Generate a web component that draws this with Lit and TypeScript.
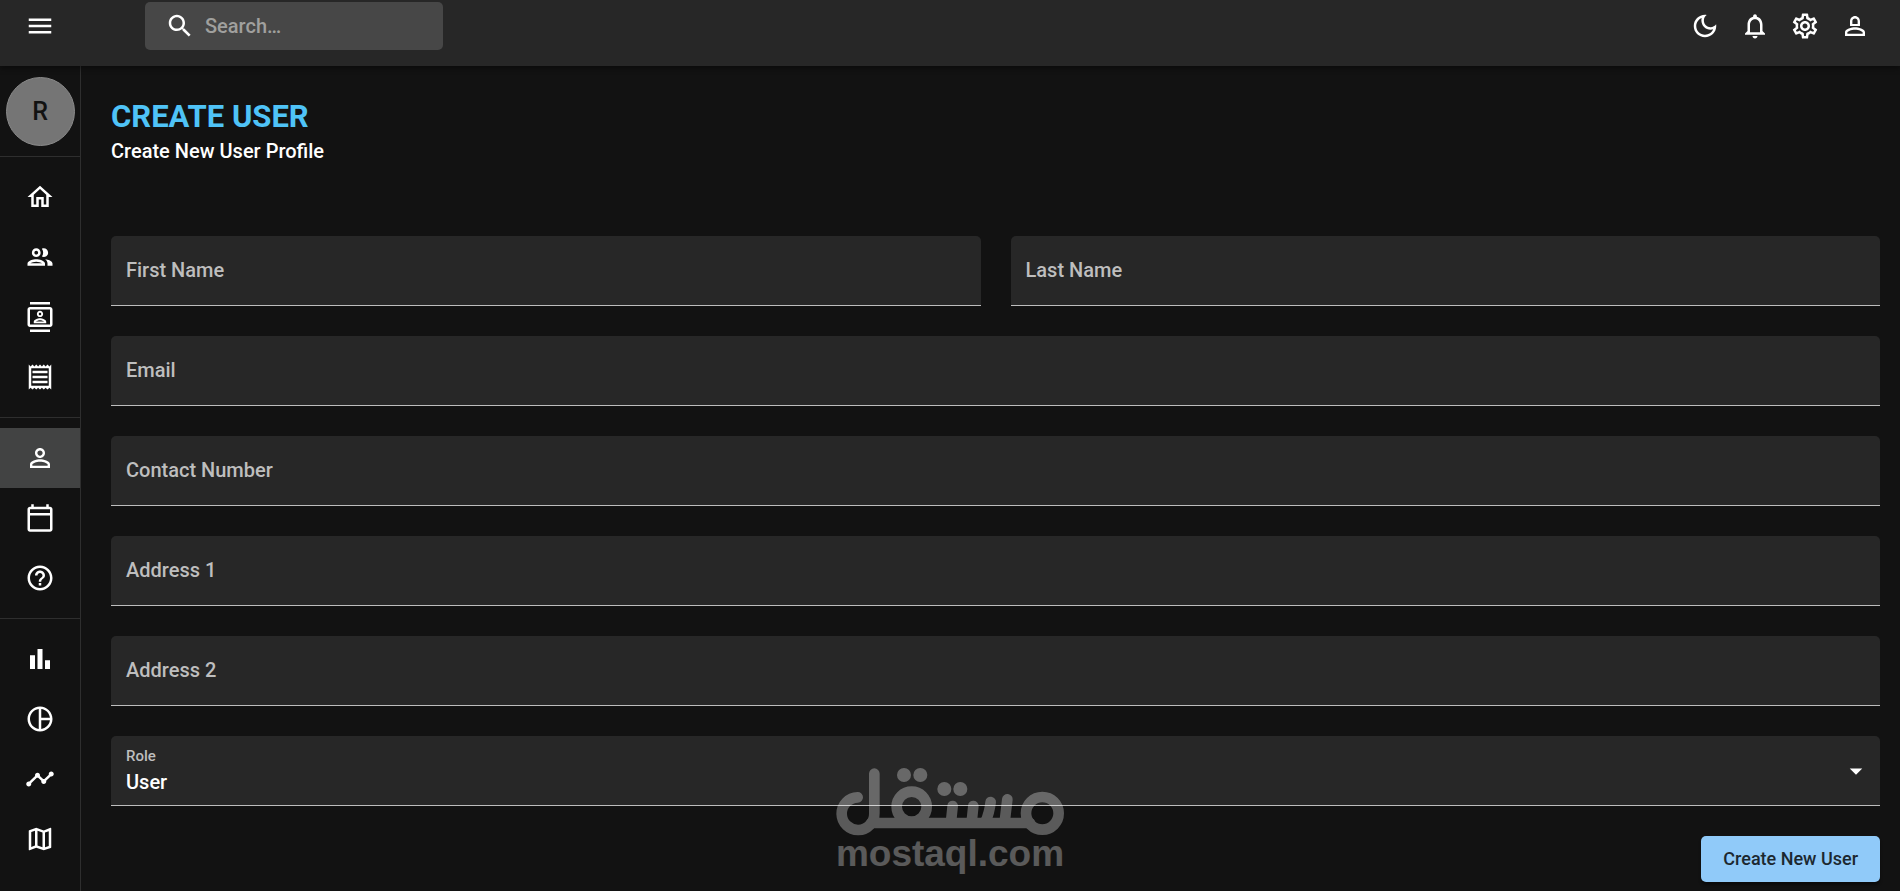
import { LitElement, html, css, svg } from "lit";
import { customElement, property } from "lit/decorators.js";
import { classMap } from "lit/directives/class-map.js";

const ICONS: Record<string, string> = {
  menu: "M3 18h18v-2H3v2zm0-5h18v-2H3v2zm0-7v2h18V6H3z",
  search:
    "M15.5 14h-.79l-.28-.27C15.41 12.59 16 11.11 16 9.5 16 5.91 13.09 3 9.5 3S3 5.91 3 9.5 5.91 16 9.5 16c1.61 0 3.09-.59 4.23-1.57l.27.28v.79l5 4.99L20.49 19l-4.99-5zm-6 0C7.01 14 5 11.99 5 9.5S7.01 5 9.5 5 14 7.01 14 9.5 11.99 14 9.5 14z",
  moon: "M9.37 5.51c-.18.64-.27 1.31-.27 1.99 0 4.08 3.32 7.4 7.4 7.4.68 0 1.35-.09 1.99-.27C17.45 17.19 14.93 19 12 19c-3.86 0-7-3.14-7-7 0-2.93 1.81-5.45 4.37-6.49zM12 3c-4.97 0-9 4.03-9 9s4.03 9 9 9 9-4.03 9-9c0-.46-.04-.92-.1-1.36-.98 1.37-2.58 2.26-4.4 2.26-2.98 0-5.4-2.42-5.4-5.4 0-1.81.89-3.42 2.26-4.4-.44-.06-.9-.1-1.36-.1z",
  bell: "M12 22c1.1 0 2-.9 2-2h-4c0 1.1.9 2 2 2zm6-6v-5c0-3.07-1.63-5.64-4.5-6.32V4c0-.83-.67-1.5-1.5-1.5s-1.5.67-1.5 1.5v.68C7.64 5.36 6 7.92 6 11v5l-2 2v1h16v-1l-2-2zm-2 1H8v-6c0-2.48 1.51-4.5 4-4.5s4 2.02 4 4.5v6z",
  settings:
    "M19.43 12.98c.04-.32.07-.64.07-.98 0-.34-.03-.66-.07-.98l2.11-1.65c.19-.15.24-.42.12-.64l-2-3.46c-.09-.16-.26-.25-.44-.25-.06 0-.12.01-.17.03l-2.49 1c-.52-.4-1.08-.73-1.69-.98l-.38-2.65C14.46 2.18 14.25 2 14 2h-4c-.25 0-.46.18-.49.42l-.38 2.65c-.61.25-1.17.59-1.69.98l-2.49-1c-.06-.02-.12-.03-.18-.03-.17 0-.34.09-.43.25l-2 3.46c-.13.22-.07.49.12.64l2.11 1.65c-.04.32-.07.65-.07.98 0 .33.03.66.07.98l-2.11 1.65c-.19.15-.24.42-.12.64l2 3.46c.09.16.26.25.44.25.06 0 .12-.01.17-.03l2.49-1c.52.4 1.08.73 1.69.98l.38 2.65c.03.24.24.42.49.42h4c.25 0 .46-.18.49-.42l.38-2.65c.61-.25 1.17-.59 1.69-.98l2.49 1c.06.02.12.03.18.03.17 0 .34-.09.43-.25l2-3.46c.12-.22.07-.49-.12-.64l-2.11-1.65zm-1.98-1.71c.04.31.05.52.05.73 0 .21-.02.43-.05.73l-.14 1.13.89.7 1.08.84-.7 1.21-1.27-.51-1.04-.42-.9.68c-.43.32-.84.56-1.25.73l-1.06.43-.16 1.13-.2 1.35h-1.4l-.19-1.35-.16-1.13-1.06-.43c-.43-.18-.83-.41-1.23-.71l-.91-.7-1.06.43-1.27.51-.7-1.21 1.08-.84.89-.7-.14-1.13c-.03-.31-.05-.54-.05-.74s.02-.43.05-.73l.14-1.13-.89-.7-1.08-.84.7-1.21 1.27.51 1.04.42.9-.68c.43-.32.84-.56 1.25-.73l1.06-.43.16-1.13.2-1.35h1.39l.19 1.35.16 1.13 1.06.43c.43.18.83.41 1.23.71l.91.7 1.06-.43 1.27-.51.7 1.21-1.07.85-.89.7.14 1.13zM12 8c-2.21 0-4 1.79-4 4s1.79 4 4 4 4-1.79 4-4-1.79-4-4-4zm0 6c-1.1 0-2-.9-2-2s.9-2 2-2 2 .9 2 2-.9 2-2 2z",
  account:
    "M12 4C9.8 4 8 5.8 8 8.3v3.2q0 .5.5.5h7q.5 0 .5-.5V8.3C16 5.8 14.2 4 12 4zm0 1.9c1.2 0 2.1.9 2.1 2.1v2.3H9.9V8c0-1.2.9-2.1 2.1-2.1zM12 14.9c2.97 0 6.1 1.46 6.1 2.1v1.1H5.9V17c0-.64 3.13-2.1 6.1-2.1M12 13c-2.67 0-8 1.34-8 4v3h16v-3c0-2.66-5.33-4-8-4z",
  person:
    "M12 5.9c1.16 0 2.1.94 2.1 2.1s-.94 2.1-2.1 2.1S9.9 9.16 9.9 8s.94-2.1 2.1-2.1m0 9c2.97 0 6.1 1.46 6.1 2.1v1.1H5.9V17c0-.64 3.13-2.1 6.1-2.1M12 4C9.79 4 8 5.79 8 8s1.79 4 4 4 4-1.79 4-4-1.79-4-4-4zm0 9c-2.67 0-8 1.34-8 4v3h16v-3c0-2.66-5.33-4-8-4z",
  home: "m12 5.69 5 4.5V18h-2v-6H9v6H7v-7.81l5-4.5M12 3 2 12h3v8h6v-6h2v6h6v-8h3L12 3z",
  people:
    "M9 13.75c-2.34 0-7 1.17-7 3.5V19h14v-1.75c0-2.33-4.66-3.5-7-3.5zM4.34 17c.84-.58 2.87-1.25 4.66-1.25s3.82.67 4.66 1.25H4.34zM9 12c1.93 0 3.5-1.57 3.5-3.5S10.93 5 9 5 5.5 6.57 5.5 8.5 7.07 12 9 12zm0-5c.83 0 1.5.67 1.5 1.5S9.83 10 9 10s-1.5-.67-1.5-1.5S8.17 7 9 7zm7.04 6.81c1.16.84 1.96 1.96 1.96 3.44V19h4v-1.75c0-2.02-3.5-3.17-5.96-3.44zM15 12c1.93 0 3.5-1.57 3.5-3.5S16.93 5 15 5c-.54 0-1.04.13-1.5.35.63.89 1 1.98 1 3.15s-.37 2.26-1 3.15c.46.22.96.35 1.5.35z",
  contacts:
    "M20 4H4c-1.1 0-2 .9-2 2v12c0 1.1.9 2 2 2h16c1.1 0 2-.9 2-2V6c0-1.1-.9-2-2-2zm0 14H4V6h16v12zM4 0h16v2H4zm0 22h16v2H4zm8-10c1.38 0 2.5-1.12 2.5-2.5S13.38 7 12 7 9.5 8.12 9.5 9.5 10.62 12 12 12zm0-3.5c.55 0 1 .45 1 1s-.45 1-1 1-1-.45-1-1 .45-1 1-1zm5 7.49C17 13.9 13.69 13 12 13s-5 .9-5 2.99V17h10v-1.01zm-8.19-.49c.61-.52 2.03-1 3.19-1 1.17 0 2.59.48 3.2 1H8.81z",
  receipt:
    "M19.5 3.5 18 2l-1.5 1.5L15 2l-1.5 1.5L12 2l-1.5 1.5L9 2 7.5 3.5 6 2 4.5 3.5 3 2v20l1.5-1.5L6 22l1.5-1.5L9 22l1.5-1.5L12 22l1.5-1.5L15 22l1.5-1.5L18 22l1.5-1.5L21 22V2l-1.5 1.5zM19 19.09H5V4.91h14v14.18zM6 15h12v2H6zm0-4h12v2H6zm0-4h12v2H6z",
  calendar:
    "M20 3h-1V1h-2v2H7V1H5v2H4c-1.1 0-2 .9-2 2v16c0 1.1.9 2 2 2h16c1.1 0 2-.9 2-2V5c0-1.1-.9-2-2-2zm0 18H4V10h16v11zm0-13H4V5h16v3z",
  help: "M11 18h2v-2h-2v2zm1-16C6.48 2 2 6.48 2 12s4.48 10 10 10 10-4.48 10-10S17.52 2 12 2zm0 18c-4.41 0-8-3.59-8-8s3.59-8 8-8 8 3.59 8 8-3.59 8-8 8zm0-14c-2.21 0-4 1.79-4 4h2c0-1.1.9-2 2-2s2 .9 2 2c0 2-3 1.75-3 5h2c0-2.25 3-2.5 3-5 0-2.21-1.79-4-4-4z",
  bar: "M4 9h4v11H4zm12 4h4v7h-4zm-6-9h4v16h-4z",
  pie: "M12 2C6.48 2 2 6.48 2 12s4.48 10 10 10 10-4.48 10-10S17.52 2 12 2zm1 2.07c3.61.45 6.48 3.33 6.93 6.93H13V4.07zM4 12c0-4.06 3.07-7.44 7-7.93v15.87c-3.93-.5-7-3.88-7-7.94zm9 7.93V13h6.93c-.45 3.61-3.32 6.48-6.93 6.93z",
  timeline:
    "M23 8c0 1.1-.9 2-2 2-.18 0-.35-.02-.51-.07l-3.56 3.55c.05.16.07.34.07.52 0 1.1-.9 2-2 2s-2-.9-2-2c0-.18.02-.36.07-.52l-2.55-2.55c-.16.05-.34.07-.52.07s-.36-.02-.52-.07l-4.55 4.56c.05.16.07.33.07.51 0 1.1-.9 2-2 2s-2-.9-2-2 .9-2 2-2c.18 0 .35.02.51.07l4.56-4.55C8.02 9.36 8 9.18 8 9c0-1.1.9-2 2-2s2 .9 2 2c0 .18-.02.36-.07.52l2.55 2.55c.16-.05.34-.07.52-.07s.36.02.52.07l3.55-3.56C19.02 8.35 19 8.18 19 8c0-1.1.9-2 2-2s2 .9 2 2z",
  map: "m20.5 3-.16.03L15 5.1 9 3 3.36 4.9c-.21.07-.36.25-.36.48V20.5c0 .28.22.5.5.5l.16-.03L9 18.9l6 2.1 5.64-1.9c.21-.07.36-.25.36-.48V3.5c0-.28-.22-.5-.5-.5zM10 5.47l4 1.4v11.66l-4-1.4V5.47zm-5 .99 3-1.01v11.7l-3 1.16V6.46zm14 11.08-3 1.01V6.86l3-1.16v11.84z",
  caret: "M7 10l5 5 5-5z",
};

@customElement("ui-icon")
export class UiIcon extends LitElement {
  @property() name = "";

  static styles = css`
    :host {
      display: block;
      width: 30px;
      height: 30px;
    }
    .glyph {
      display: block;
      width: 100%;
      height: 100%;
      fill: currentColor;
    }
  `;

  render() {
    return html`<svg class="glyph" viewBox="0 0 24 24" aria-hidden="true">
      ${svg`<path d=${ICONS[this.name] ?? ""}></path>`}
    </svg>`;
  }
}

@customElement("top-bar")
export class TopBar extends LitElement {
  static styles = css`
    :host {
      display: block;
    }
    .bar {
      display: flex;
      align-items: center;
      padding: 2px 20px 16px 15px;
      background: #272727;
      box-shadow: 0 3px 5px rgba(0, 0, 0, 0.35);
    }
    .icon-button {
      display: grid;
      place-items: center;
      width: 50px;
      height: 48px;
      padding: 0;
      border: 0;
      background: none;
      color: #fff;
      cursor: pointer;
    }
    .search {
      display: flex;
      align-items: center;
      gap: 10px;
      box-sizing: border-box;
      width: 298px;
      height: 48px;
      margin-left: 80px;
      padding: 0 15px 0 20px;
      border-radius: 5px;
      background: #474747;
      color: #fff;
    }
    .search-icon {
      flex: none;
    }
    .search-input {
      flex: 1;
      min-width: 0;
      padding: 0;
      border: 0;
      outline: 0;
      background: none;
      color: inherit;
      font: 500 20px/28px Roboto, sans-serif;
    }
    .search-input::placeholder {
      color: #a0a09e;
      opacity: 1;
    }
    .actions {
      display: flex;
      margin-left: auto;
    }
  `;

  render() {
    const actions = [
      ["moon", "Toggle theme"],
      ["bell", "Notifications"],
      ["settings", "Settings"],
      ["account", "Account"],
    ];
    return html`<header class="bar">
      <button class="icon-button" aria-label="Open menu"><ui-icon name="menu"></ui-icon></button>
      <label class="search">
        <ui-icon class="search-icon" name="search"></ui-icon>
        <input class="search-input" type="search" placeholder="Search…" aria-label="Search" />
      </label>
      <div class="actions">
        ${actions.map(
          ([icon, label]) =>
            html`<button class="icon-button" aria-label=${label}><ui-icon name=${icon}></ui-icon></button>`
        )}
      </div>
    </header>`;
  }
}

@customElement("side-nav")
export class SideNav extends LitElement {
  @property() active = "person";

  static styles = css`
    :host {
      display: block;
      flex: none;
      box-sizing: border-box;
      width: 81px;
      padding-top: 11px;
      border-right: 1px solid #2e2e2e;
    }
    .avatar {
      display: grid;
      place-items: center;
      box-sizing: border-box;
      width: 69px;
      height: 69px;
      margin: 0 auto 10px;
      border: 1px solid #8a8a8a;
      border-radius: 50%;
      background: #757575;
      color: #121212;
      font: 500 25px/30px Roboto, sans-serif;
    }
    .group {
      padding: 10px 0;
      border-top: 1px solid #2e2e2e;
    }
    .link {
      display: grid;
      place-items: center;
      height: 60px;
      color: #fff;
    }
    .current {
      background: #424343;
    }
  `;

  private groups = [
    [
      ["home", "Dashboard"],
      ["people", "Manage Team"],
      ["contacts", "Contacts Information"],
      ["receipt", "Invoices"],
    ],
    [
      ["person", "Profile Form"],
      ["calendar", "Calendar"],
      ["help", "FAQ"],
    ],
    [
      ["bar", "Bar Chart"],
      ["pie", "Pie Chart"],
      ["timeline", "Line Chart"],
      ["map", "Geography Chart"],
    ],
  ];

  render() {
    return html`<div class="avatar">R</div>
      <nav>
        ${this.groups.map(
          (group) => html`<div class="group">
            ${group.map(
              ([icon, label]) => html`<a
                class=${classMap({ link: true, current: icon === this.active })}
                href="#${icon}"
                aria-label=${label}
                ><ui-icon name=${icon}></ui-icon
              ></a>`
            )}
          </div>`
        )}
      </nav>`;
  }
}

@customElement("user-form")
export class UserForm extends LitElement {
  static styles = css`
    :host {
      display: block;
    }
    .form {
      display: grid;
      grid-template-columns: 1fr 1fr;
      gap: 30px;
    }
    .field {
      display: grid;
      grid-column: 1 / -1;
      height: 69px;
      border-bottom: 1px solid #bdbdbd;
      border-radius: 5px 5px 0 0;
      background: #272727;
    }
    .half {
      grid-column: auto;
    }
    .label,
    .control,
    .caret {
      grid-area: 1 / 1;
    }
    .label {
      align-self: start;
      justify-self: start;
      padding: 19px 0 0 15px;
      color: #bebebe;
      font: 500 20px/30px Roboto, sans-serif;
      pointer-events: none;
      z-index: 1;
    }
    .control:focus + .label,
    .control:not(:placeholder-shown) + .label {
      padding-top: 10px;
      font-size: 15px;
      line-height: 20px;
    }
    .control {
      appearance: none;
      box-sizing: border-box;
      width: 100%;
      height: 100%;
      min-width: 0;
      padding: 28px 15px 5px;
      border: 0;
      border-radius: 5px 5px 0 0;
      outline: 0;
      background: none;
      color: #fff;
      font: 500 20px/30px Roboto, sans-serif;
    }
    .caret {
      align-self: center;
      justify-self: end;
      margin-right: 9px;
      color: #fff;
      pointer-events: none;
    }
    .submit {
      grid-column: 1 / -1;
      justify-self: end;
      height: 46px;
      padding: 0 22px;
      border: 0;
      border-radius: 5px;
      background: #90caf9;
      box-shadow: 0 3px 3px rgba(0, 0, 0, 0.4);
      color: #1c2830;
      font: 500 18px/30px Roboto, sans-serif;
      cursor: pointer;
    }
  `;

  private fields = [
    { id: "first-name", label: "First Name", type: "text", half: true },
    { id: "last-name", label: "Last Name", type: "text", half: true },
    { id: "email", label: "Email", type: "email", half: false },
    { id: "contact", label: "Contact Number", type: "tel", half: false },
    { id: "address-1", label: "Address 1", type: "text", half: false },
    { id: "address-2", label: "Address 2", type: "text", half: false },
  ];

  render() {
    return html`<form class="form" @submit=${(e: Event) => e.preventDefault()}>
      ${this.fields.map(
        (f) => html`<div class=${classMap({ field: true, half: f.half })}>
          <input class="control" id=${f.id} type=${f.type} placeholder=" " />
          <label class="label" for=${f.id}>${f.label}</label>
        </div>`
      )}
      <div class="field">
        <select class="control" id="role">
          <option>User</option>
          <option>Manager</option>
          <option>Admin</option>
        </select>
        <label class="label" for="role">Role</label>
        <ui-icon class="caret" name="caret"></ui-icon>
      </div>
      <button class="submit" type="submit">Create New User</button>
    </form>`;
  }
}

@customElement("brand-mark")
export class BrandMark extends LitElement {
  static styles = css`
    :host {
      display: flex;
      flex-direction: column;
      align-items: center;
      width: 240px;
      opacity: 0.3;
      color: #fff;
      pointer-events: none;
    }
    .logo {
      display: block;
      width: 240px;
      height: 72px;
    }
    .lines {
      fill: none;
      stroke: #fff;
      stroke-width: 32;
      stroke-linecap: round;
    }
    .dots {
      fill: #fff;
    }
    .name {
      font: 700 37px/34px "Liberation Sans", Arial, sans-serif;
    }
  `;

  render() {
    return html`<svg class="logo" viewBox="90 105 720 216" aria-hidden="true">
        <g class="lines">
          <path d="M173 202A49 49 0 1 0 223 250V131" />
          <path d="M214 279H690" />
          <circle cx="335" cy="230" r="45" />
          <path d="M458 228L453 276M520 228L515 276M572 216Q568 250 556 276M622 208L614 276" />
          <circle cx="727" cy="250" r="49" />
        </g>
        <g class="dots">
          <circle cx="312" cy="135" r="21" />
          <circle cx="361" cy="135" r="21" />
          <circle cx="433" cy="177" r="21" />
          <circle cx="481" cy="177" r="21" />
        </g>
      </svg>
      <span class="name">mostaql.com</span>`;
  }
}

@customElement("app-root")
export class AppRoot extends LitElement {
  static styles = css`
    :host {
      display: flex;
      flex-direction: column;
      position: relative;
      min-height: 100vh;
      background: #121212;
      color: #fff;
      font-family: Roboto, sans-serif;
    }
    .top {
      position: relative;
      z-index: 1;
    }
    .body {
      display: flex;
      flex: 1;
    }
    .main {
      flex: 1;
      min-width: 0;
      padding: 30px 20px 8px 30px;
    }
    .title {
      margin: 0;
      color: #4fc3f7;
      font: 700 31px/42px Roboto, sans-serif;
    }
    .subtitle {
      margin: 0 0 72px;
      font: 500 20px/26px Roboto, sans-serif;
    }
    .watermark {
      position: absolute;
      bottom: 20px;
      left: 50%;
      margin-left: -120px;
    }
  `;

  render() {
    return html`<top-bar class="top"></top-bar>
      <div class="body">
        <side-nav></side-nav>
        <main class="main">
          <h1 class="title">CREATE USER</h1>
          <p class="subtitle">Create New User Profile</p>
          <user-form></user-form>
        </main>
      </div>
      <brand-mark class="watermark"></brand-mark>`;
  }
}
